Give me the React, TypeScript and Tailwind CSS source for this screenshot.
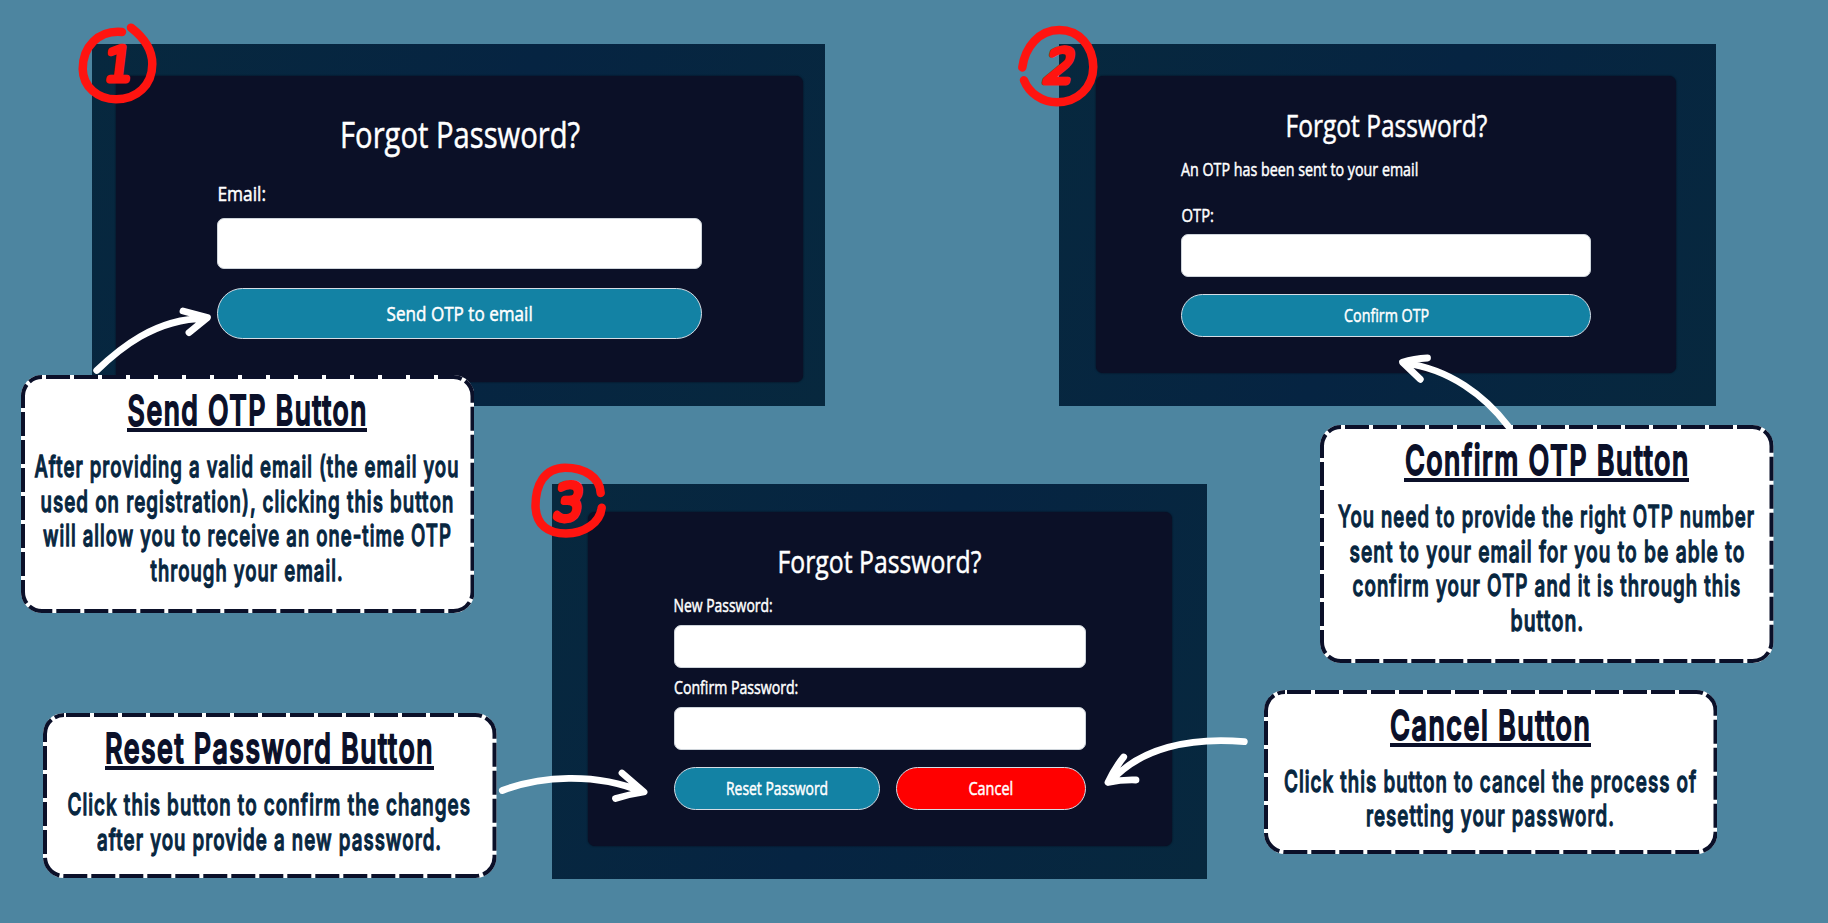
import { useLayoutEffect, useRef } from "react";
import type { ReactNode } from "react";

/** One line of text, condensed horizontally to fill the width of its box. */
function Line({ className = "", children }: { className?: string; children: ReactNode }) {
  const box = useRef<HTMLDivElement>(null);
  const text = useRef<HTMLSpanElement>(null);
  useLayoutEffect(() => {
    if (box.current && text.current) {
      const ratio = box.current.clientWidth / text.current.offsetWidth;
      text.current.style.transform = `scaleX(${ratio})`;
    }
  }, []);
  return (
    <div ref={box} className={`flex justify-center whitespace-nowrap ${className}`}>
      <span ref={text} className="block shrink-0">
        {children}
      </span>
    </div>
  );
}

function Panel({ className, cardClass, children }: { className: string; cardClass: string; children: ReactNode }) {
  return (
    <section
      className={`absolute bg-linear-115 from-[#07283e] via-[#062442] to-[#07283e] font-['Open_Sans','Noto_Sans',sans-serif] text-white [-webkit-text-stroke:0.5px_#fff] ${className}`}
    >
      <div className={`flex flex-col rounded-[7px] bg-[#0b1027] shadow-[0_0_2px_#050a18] ${cardClass}`}>{children}</div>
    </section>
  );
}

function Field({ className }: { className: string }) {
  return <input aria-label="field" className={`block w-full shrink-0 rounded-[7px] border border-[#ced4da] bg-white ${className}`} />;
}

function Pill({ className, children }: { className: string; children: ReactNode }) {
  return (
    <button className={`flex shrink-0 items-center justify-center rounded-full border border-[#d5dde5] ${className}`}>
      {children}
    </button>
  );
}

function Callout({
  className,
  height,
  offset,
  title,
  titleClass,
  children,
}: {
  className: string;
  height: number;
  offset: number;
  title: string;
  titleClass: string;
  children: ReactNode;
}) {
  return (
    <aside className={`absolute w-[453.5px] font-['Inter',sans-serif] ${className}`}>
      <svg className="absolute inset-0" width="453.5" height={height}>
        <rect width="453.5" height={height} rx="21" fill="#fff" />
        <rect
          x="2"
          y="2"
          width="449.5"
          height={height - 4}
          rx="19"
          fill="none"
          stroke="#0b1029"
          strokeWidth="4"
          strokeDasharray="24 4"
          strokeDashoffset={offset}
        />
      </svg>
      <div className="relative flex flex-col items-center pt-[10px]">
        <div className="border-b-4 border-[#0b1029]">
          <Line
            className={`h-[43px] text-[41.5px] leading-[50px] font-medium tracking-[0.055em] text-[#0b1029] [-webkit-text-stroke:2px_#0b1029] ${titleClass}`}
          >
            {title}
          </Line>
        </div>
        <div className="mt-[17.4px] flex flex-col items-center text-[29.5px] leading-[34.4px] font-medium tracking-[0.055em] text-[#07263f] [-webkit-text-stroke:1.3px_#07263f]">
          {children}
        </div>
      </div>
    </aside>
  );
}

function Drawings() {
  return (
    <svg className="pointer-events-none absolute inset-0" width="1828" height="923" viewBox="0 0 1828 923" fill="none" strokeLinecap="round" strokeLinejoin="round">
      <g stroke="#fff" strokeWidth="6.8">
        <path d="M96.7 370.5C118 350 155 318 206 318.5M183 311L207.5 317.5L189 332.7" />
        <path d="M1508 426C1485 396 1450 369 1404 363M1427.5 358Q1414 358.5 1402.5 362.3L1420.3 379.3" />
        <path d="M502.3 790.5C540 776 595 772 643 792M622 773L644 792Q630 794 615.5 798.5" />
        <path d="M1244.3 741.7C1190 737 1140 748 1110 782M1123.7 757Q1114 769 1108 782.5Q1122 779.5 1136 780" />
      </g>
      <g stroke="#ff1410" strokeWidth="8.5">
        <path d="M122 32C98 30 82.7 47 82.7 69C83 87 98 99.3 116 99.3C137 99.3 152.3 85 152.3 64C152.3 50 143 37 131 27.7" />
        <path d="M1022.3 67.5C1025 47 1039 30 1059.3 30C1079 30 1093 46 1093.3 67C1093 88 1077 102.3 1057 102.3C1042 102.3 1029 93 1024 80.3" />
        <path d="M600.7 493C600 477 584 467.7 565 467.7C544 468 535.5 485 535.5 506C536 525 548 533.5 566 533.5C584 533.5 600 523 601.7 507.7" />
      </g>
      <g
        className="font-['DejaVu_Sans_Light','DejaVu_Sans',sans-serif] text-[45px] font-extralight"
        fill="#ff1410"
        stroke="#ff1410"
        strokeWidth="7"
        textAnchor="middle"
      >
        <text transform="translate(117 80.3) skewX(-7)">1</text>
        <text transform="translate(1056.5 81.5) skewX(-14)">2</text>
        <text transform="translate(566.5 518.5) skewX(-8) scale(1 1.06)">3</text>
      </g>
    </svg>
  );
}

export default function App() {
  return (
    <main className="relative h-[923px] w-[1828px] overflow-hidden bg-[#4d85a0]">
      <Panel className="top-[43.5px] left-[92.4px] h-[362px] w-[732.6px] pt-[32.2px] pl-[23.4px]" cardClass="h-[306px] w-[687.7px] pr-[101.5px] pl-[101.5px]">
        <Line className="mt-[39.2px] w-[240px] self-center text-[36px] leading-[40px]">Forgot Password?</Line>
        <Line className="mt-[24.4px] w-[49px] text-[20.5px] leading-[28px]">Email:</Line>
        <Field className="mt-[11px] h-[50.4px]" />
        <Pill className="mt-[19.3px] h-[51px] bg-[#1382a4]">
          <Line className="w-[146px] text-[20.5px] leading-[28px]">Send OTP to email</Line>
        </Pill>
      </Panel>

      <Panel className="top-[43.5px] left-[1059px] h-[362px] w-[657px] pt-[32.2px] pl-[37px]" cardClass="h-[297px] w-[579.7px] pr-[84.7px] pl-[85.3px]">
        <Line className="mt-[31.1px] w-[202px] self-center text-[30.5px] leading-[36px]">Forgot Password?</Line>
        <Line className="mt-[14.4px] w-[237px] text-[18px] leading-[24px]">An OTP has been sent to your email</Line>
        <Line className="mt-[21.5px] w-[32px] text-[18px] leading-[24px]">OTP:</Line>
        <Field className="mt-[7.6px] h-[42.7px]" />
        <Pill className="mt-[17.3px] h-[43px] bg-[#1382a4]">
          <Line className="w-[85px] text-[18px] leading-[23px]">Confirm OTP</Line>
        </Pill>
      </Panel>

      <Panel className="top-[484px] left-[552px] h-[395px] w-[655px] pt-[27.7px] pl-[36px]" cardClass="h-[334.3px] w-[583.5px] pr-[85.8px] pl-[86px]">
        <Line className="mt-[30.9px] w-[204px] self-center text-[30.5px] leading-[36px]">Forgot Password?</Line>
        <Line className="mt-[14.9px] w-[99px] text-[18px] leading-[24px]">New Password:</Line>
        <Field className="mt-[7.5px] h-[43px]" />
        <Line className="mt-[6.9px] w-[124px] text-[18px] leading-[24px]">Confirm Password:</Line>
        <Field className="mt-[8.1px] h-[43.5px]" />
        <div className="mt-[16.2px] flex gap-4">
          <Pill className="h-[43px] w-[206px] bg-[#1382a4]">
            <Line className="w-[102px] text-[18px] leading-[24px]">Reset Password</Line>
          </Pill>
          <Pill className="h-[43px] w-[189.7px] bg-[#ff0000]">
            <Line className="w-[45px] text-[18px] leading-[24px]">Cancel</Line>
          </Pill>
        </div>
      </Panel>

      <Callout className="top-[375px] left-[20.6px]" height={238} offset={24} title="Send OTP Button" titleClass="w-[240px]">
        <Line className="w-[425px]">After providing a valid email (the email you</Line>
        <Line className="w-[414px]">used on registration), clicking this button</Line>
        <Line className="w-[409px]">will allow you to receive an one-time OTP</Line>
        <Line className="w-[193px]">through your email.</Line>
      </Callout>

      <Callout className="top-[425px] left-[1320.2px]" height={238} offset={24} title="Confirm OTP Button" titleClass="w-[285px]">
        <Line className="w-[417px]">You need to provide the right OTP number</Line>
        <Line className="w-[396px]">sent to your email for you to be able to</Line>
        <Line className="w-[389px]">confirm your OTP and it is through this</Line>
        <Line className="w-[74px]">button.</Line>
      </Callout>

      <Callout className="top-[713px] left-[43px]" height={165} offset={-2} title="Reset Password Button" titleClass="w-[329px]">
        <Line className="w-[404px]">Click this button to confirm the changes</Line>
        <Line className="w-[345px]">after you provide a new password.</Line>
      </Callout>

      <Callout className="top-[689.5px] left-[1263.8px]" height={164} offset={-2} title="Cancel Button" titleClass="w-[201px]">
        <Line className="w-[413px]">Click this button to cancel the process of</Line>
        <Line className="w-[249px]">resetting your password.</Line>
      </Callout>

      <Drawings />
    </main>
  );
}
